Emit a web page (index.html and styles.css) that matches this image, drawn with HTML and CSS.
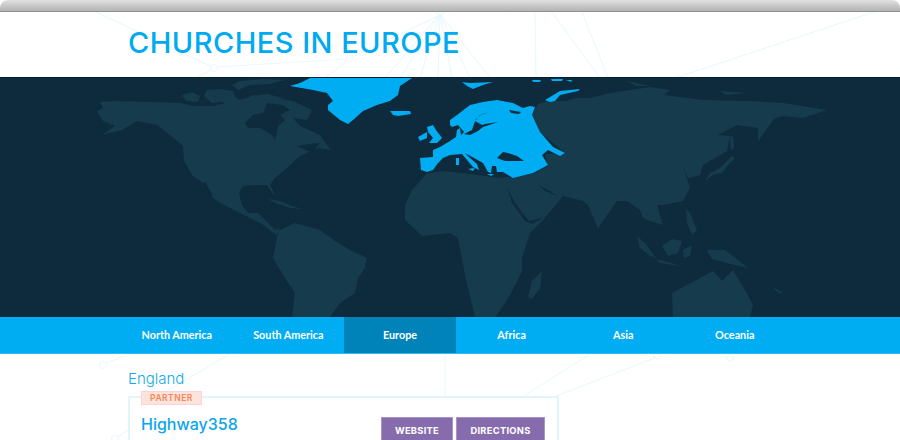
FILE: index.html
```html
<!DOCTYPE html>
<html lang="en">
<head>
    <meta charset="UTF-8">
    <title>Churches in Europe</title>
    <link rel="stylesheet" href="styles.css">
</head>
<body>
    <svg class="network" viewBox="0 0 900 440" aria-hidden="true">
        <g class="net-lines">
            <path d="M96,12 L210,66 M218,67 L346,59 M196,78 L211,70 M354,56 L440,15 M325,78 L347,61 M440,14 L385,78 M440,14 L400,78 M440,14 L420,78 M440,14 L438,78 M440,14 L452,78 M440,14 L470,78 M440,14 L490,78 M535,12 L536,78 M552,12 L600,78 M582,12 L608,78 M874,12 L675,78"/>
            <path d="M128,354 L107,363 M230,354 L130,412 M445,354 L445,396 M590,354 L524,396 M655,358 L556,396 M128,430 L118,437"/>
            <circle cx="214" cy="68" r="3.5"/>
            <circle cx="350" cy="58" r="3.5"/>
            <circle cx="440" cy="10" r="5"/>
            <circle cx="103" cy="365" r="3.5"/>
            <circle cx="657" cy="355" r="3.5"/>
            <circle cx="730" cy="358" r="3.5"/>
            <circle cx="115" cy="439" r="3.5"/>
        </g>
    </svg>

    <div class="topbar"></div>

    <header class="page-header">
        <h1>CHURCHES IN EUROPE</h1>
    </header>

    <div class="map">
        <svg viewBox="0 0 900 239" width="900" height="239" aria-label="World map with Europe highlighted">
            <g class="land">
                <!-- north america -->
                <path d="M97,33 L103,30 L100,24 L117,23 L150,24 L180,25 L193,28 L213,28 L247,20 L253,17 L293,23 L312,32 L307,42 L293,40 L300,48 L320,57 L323,62 L331,72 L318,70 L300,78 L287,90 L275,100 L270,107 L275,117 L272,115 L267,107 L257,107 L243,108 L239,115 L242,127 L248,135 L258,135 L263,140 L275,152 L280,150 L276,157 L262,146 L248,139 L232,131 L222,126 L213,120 L203,105 L192,97 L184,83 L183,68 L170,57 L157,47 L137,43 L122,52 L102,57 L115,48 L103,43 Z"/>
                <path d="M182,17 L192,14 L200,18 L198,24 L186,23 Z"/>
                <path d="M207,12 L220,11 L233,13 L236,20 L244,24 L232,28 L222,24 L212,25 L204,18 Z"/>
                <path d="M240,3 L262,1 L285,2 L270,6 L250,7 L238,12 L232,7 Z"/>
                <path d="M252,18 L268,16 L285,21 L270,22 Z"/>
                <path d="M268,121 L280,123 L295,129 L303,131 L290,130 L275,125 Z"/>
                <!-- south america -->
                <path d="M278,153 L295,145 L320,152 L338,165 L350,172 L367,180 L365,190 L358,200 L355,215 L340,225 L330,239 L292,239 L295,215 L285,200 L273,180 L276,165 Z"/>
                <!-- africa, arabia, asia -->
                <path d="M405,127 L412,112 L420,103 L427,95 L445,93 L470,96 L500,100 L532,96 L548,88 L545,76 L565,75 L540,54 L532,37 L538,26 L547,23 L565,23 L577,20 L590,20 L610,15 L650,9 L670,12 L664,17 L703,22 L750,23 L783,25 L827,32 L803,40 L783,38 L775,40 L758,63 L758,50 L737,47 L718,57 L730,58 L727,73 L703,87 L700,97 L688,100 L683,88 L690,110 L683,123 L663,127 L657,127 L663,147 L650,143 L643,140 L640,132 L627,123 L617,123 L598,150 L588,127 L583,123 L563,118 L560,122 L543,142 L530,155 L522,180 L522,193 L510,217 L500,233 L495,239 L475,239 L465,197 L458,160 L450,155 L422,158 L405,142 Z"/>
                <path d="M637,158 L645,165 L656,180 L650,178 L640,170 Z"/>
                <path d="M662,168 L672,161 L682,163 L678,175 L668,178 Z"/>
                <path d="M686,131 L690,135 L697,152 L692,157 L687,145 Z"/>
                <path d="M683,172 L692,167 L690,178 L684,180 Z"/>
                <path d="M707,172 L725,172 L748,190 L730,186 L712,181 Z"/>
                <path d="M656,181 L675,186 L680,188 L660,185 Z"/>
                <!-- japan and sakhalin -->
                <path d="M705,103 L713,97 L722,95 L728,87 L735,80 L732,78 L727,83 L720,90 L710,95 Z"/>
                <path d="M730,59 L733,58 L734,70 L731,72 Z"/>
                <path d="M672,215 L700,200 L713,193 L722,203 L733,192 L745,212 L753,227 L750,239 L673,239 Z"/>
                <path d="M528,219 L532,203 L542,193 L540,210 L532,221 Z"/>
                <path d="M773,209 L782,214 L781,216 L775,212 Z"/>
                <path d="M627,3 L645,7 L650,8 L636,8 Z"/>
                <path d="M720,13 L747,15 L725,17 Z"/>
            </g>
            <g class="sea">
                <!-- hudson bay, st lawrence, baja, red sea, gulf -->
                <path d="M245,45 L253,37 L263,35 L267,25 L283,27 L290,32 L280,37 L285,42 L278,48 L275,62 L272,57 L260,50 L248,50 Z"/>
                <path d="M297,68 L308,66 L320,65 L312,75 Z"/>
                <path d="M205,104 L213,118 L210,117 L203,106 Z"/>
                <path d="M507,110 L515,125 L529,143 L543,140 L532,146 L525,143 L512,125 Z"/>
                <path d="M538,107 L550,113 L557,118 L545,113 Z"/>
            </g>
            <g class="europe">
                <!-- greenland and iceland -->
                <path d="M290,8 L300,5 L310,0 L412,0 L400,8 L398,17 L390,23 L377,27 L363,33 L353,42 L348,46 L340,42 L328,32 L328,27 L333,23 L327,15 L313,12 Z"/>
                <path d="M390,33 L410,33 L411,36 L398,38 L393,37 Z"/>
                <!-- uk and ireland -->
                <path d="M427,49 L433,47 L436,52 L442,60 L437,65 L429,65 L433,60 L428,54 Z"/>
                <path d="M418,59 L427,54 L427,60 L420,63 Z"/>
                <!-- mainland and scandinavia -->
                <path d="M420,80 L433,79 L433,72 L440,69 L450,63 L456,59 L457,52 L460,50 L461,57 L464,54 L458,47 L452,49 L450,47 L450,42 L457,37 L470,27 L483,24 L497,22 L513,25 L523,30 L530,28 L535,29 L532,37 L540,54 L553,69 L565,75 L560,78 L548,72 L542,77 L548,87 L533,95 L513,100 L503,94 L497,94 L496,88 L492,88 L491,95 L488,94 L483,85 L465,75 L470,80 L477,86 L479,92 L473,89 L467,82 L462,76 L450,77 L443,80 L438,85 L433,92 L427,94 L421,92 Z"/>
                <!-- islands -->
                <path d="M456,80 L459,80 L459,87 L456,87 Z"/>
                <path d="M468,91 L475,90 L473,93 Z"/>
                <path d="M487,96 L494,96 L491,98 Z"/>
                <path d="M545,22 L560,13 L580,11 L578,13 L560,17 L555,23 L550,24 Z"/>
                <path d="M462,4 L470,5 L493,4 L483,7 L473,11 L467,8 Z"/>
                <path d="M532,2 L541,2 L540,4 L533,4 Z M551,1 L563,1 L562,3 L552,3 Z M566,2 L572,2 L571,4 Z"/>
            </g>
            <g class="sea">
                <!-- baltic, white sea and black sea -->
                <path d="M464,56 L470,57 L478,53 L483,49 L498,44 L485,46 L482,47 L475,43 L480,37 L490,34 L482,36 L476,41 L474,46 L472,52 L466,55 Z"/>
                <path d="M509,32 L521,34 L519,36 L511,35 Z"/>
                <path d="M497,80 L503,74 L508,75 L517,78 L524,83 L515,83 L505,83 Z"/>
            </g>
        </svg>
    </div>

    <nav class="regions">
        <a href="#">North America</a>
        <a href="#">South America</a>
        <a href="#" class="active">Europe</a>
        <a href="#">Africa</a>
        <a href="#">Asia</a>
        <a href="#">Oceania</a>
    </nav>

    <main class="content">
        <h2>England</h2>
        <div class="church">
            <span class="badge">PARTNER</span>
            <div class="church-info">
                <h3>Highway358</h3>
                <p>Bristol, South West</p>
            </div>
            <div class="actions">
                <a href="#" class="btn btn-website">WEBSITE</a>
                <a href="#" class="btn btn-directions">DIRECTIONS</a>
            </div>
        </div>
    </main>
</body>
</html>
```

FILE: styles.css
```css
html, body {
    margin: 0;
    height: 440px;
    overflow: hidden;
}
body {
    position: relative;
    background: white;
    font-family: "Inter", "Liberation Sans", sans-serif;
}
.network {
    position: absolute;
    top: 0;
    left: 0;
    width: 900px;
    height: 440px;
}
.net-lines {
    fill: none;
    stroke: #e8f8fc;
    stroke-width: 1;
}
.topbar {
    position: relative;
    height: 11px;
    border-bottom: 1px solid #8f8f8f;
    border-radius: 8px 8px 0 0;
    background: linear-gradient(#e2e2e2, #c9c9c9 50%, #b4b4b4);
}
.page-header {
    position: relative;
    height: 65px;
    padding-left: 128px;
}
.page-header h1 {
    margin: 0;
    font-size: 29px;
    font-weight: 500;
    line-height: 61px;
    letter-spacing: 0.47px;
    color: #00aaf0;
}
.map {
    position: relative;
    height: 239px;
    border-top: 1px solid #05202f;
    background: #0d2b3d;
}
.map svg {
    display: block;
}
.land {
    fill: #163b4d;
}
.sea {
    fill: #0d2b3d;
}
.europe {
    fill: #00adf2;
}
.regions {
    position: relative;
    display: flex;
    height: 36px;
    padding-left: 121px;
    border-bottom: 1px solid #2cbcf6;
    background: #00adf2;
}
.regions a {
    width: 111.6px;
    font-family: "Lato", "Liberation Sans", sans-serif;
    font-size: 10.8px;
    font-weight: 700;
    line-height: 36px;
    text-align: center;
    text-decoration: none;
    color: white;
}
.regions a.active {
    background: #0083b8;
}
.content {
    position: relative;
    padding: 16px 0 0 128px;
}
.content h2 {
    margin: 0 0 8px;
    font-size: 15px;
    font-weight: 300;
    line-height: 18px;
    color: #12a9ee;
}
.church {
    position: relative;
    display: flex;
    justify-content: space-between;
    box-sizing: border-box;
    width: 431px;
    height: 44px;
    padding: 19px 12px 0 11px;
    border: 2px solid #e2f5fb;
    border-bottom: 0;
    background: white;
}
.badge {
    position: absolute;
    top: -7px;
    left: 11px;
    box-sizing: border-box;
    width: 61px;
    height: 14px;
    border: 1px solid #fcd3dc;
    background: #fde4da;
    font-size: 8.5px;
    font-weight: 600;
    line-height: 12px;
    letter-spacing: 0.5px;
    text-align: center;
    color: #f6845c;
}
.church-info h3 {
    margin: -3px 0 0;
    font-size: 16px;
    font-weight: 500;
    line-height: 20px;
    color: #0ca5ec;
}
.church-info p {
    margin: 4px 0 0;
    font-size: 10px;
    line-height: 12px;
    color: #444;
}
.actions {
    display: flex;
    gap: 3px;
    align-items: flex-start;
}
.btn {
    box-sizing: border-box;
    height: 28px;
    border: 1px solid #a794c8;
    background: #866cad;
    font-size: 9.3px;
    font-weight: 700;
    line-height: 26px;
    letter-spacing: 0.3px;
    text-align: center;
    text-decoration: none;
    color: white;
}
.btn-website {
    width: 72px;
}
.btn-directions {
    width: 89px;
}
```
